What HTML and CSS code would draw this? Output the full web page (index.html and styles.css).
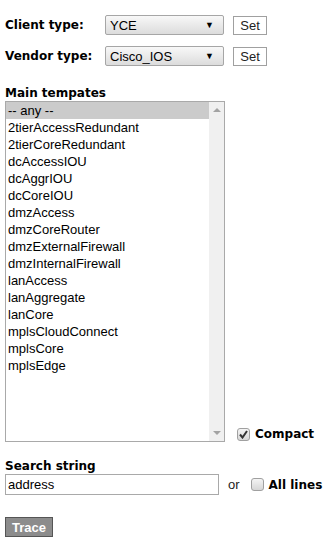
FILE: index.html
```html
<!DOCTYPE html>
<html lang="en">
<head>
  <meta charset="UTF-8" />
  <title>Trace</title>
  <link rel="stylesheet" href="styles.css">
</head>
<body>

<div class="form">
  <!-- types -->
  <div class="type-row">
    <span class="label">Client type:</span>
    <div class="dropdown"><span>YCE</span><span class="arrow">&#9660;</span></div>
    <button class="set-btn">Set</button>
  </div>
  <div class="type-row">
    <span class="label">Vendor type:</span>
    <div class="dropdown"><span>Cisco_IOS</span><span class="arrow">&#9660;</span></div>
    <button class="set-btn">Set</button>
  </div>

  <!-- templates -->
  <div class="heading templates-title">Main tempates</div>
  <div class="templates-row">
    <div class="listbox">
      <div class="options">
        <div class="opt selected">-- any --</div>
        <div class="opt">2tierAccessRedundant</div>
        <div class="opt">2tierCoreRedundant</div>
        <div class="opt">dcAccessIOU</div>
        <div class="opt">dcAggrIOU</div>
        <div class="opt">dcCoreIOU</div>
        <div class="opt">dmzAccess</div>
        <div class="opt">dmzCoreRouter</div>
        <div class="opt">dmzExternalFirewall</div>
        <div class="opt">dmzInternalFirewall</div>
        <div class="opt">lanAccess</div>
        <div class="opt">lanAggregate</div>
        <div class="opt">lanCore</div>
        <div class="opt">mplsCloudConnect</div>
        <div class="opt">mplsCore</div>
        <div class="opt">mplsEdge</div>
      </div>
      <div class="scrollbar">
        <span class="sb-up"></span>
        <span class="sb-down"></span>
      </div>
    </div>
    <label class="check compact">
      <span class="box"><svg width="9" height="9" viewBox="0 0 9 9"><path d="M1 4.5 L3.5 7.5 L8 1" fill="none" stroke="#333" stroke-width="2"/></svg></span>
      <span class="heading">Compact</span>
    </label>
  </div>

  <!-- search -->
  <div class="heading search-title">Search string</div>
  <div class="search-row">
    <div class="textbox">address</div>
    <span class="or">or</span>
    <label class="check">
      <span class="box"></span>
      <span class="heading">All lines</span>
    </label>
  </div>

  <button class="trace-btn">Trace</button>
</div>

</body>
</html>
```

FILE: styles.css
```css
body {
  margin: 0;
  background: #fff;
  color: #000;
  font-family: 'Liberation Sans', Arial, sans-serif;
  font-size: 13px;
}

.form {
  padding: 15px 5px 0 5px;
}

.heading, .label {
  font-family: 'DejaVu Sans', Verdana, sans-serif;
  font-weight: bold;
  font-size: 12px;
  white-space: nowrap;
}

.type-row {
  display: flex;
  align-items: center;
  height: 20px;
  margin-bottom: 11px;
}

.label {
  flex: none;
  width: 100px;
}

.dropdown {
  flex: none;
  width: 113px;
  height: 18px;
  border: 1px solid #a6a6a6;
  border-radius: 2px;
  background: linear-gradient(#f8f8f8, #dcdcdc);
  display: flex;
  align-items: center;
  justify-content: space-between;
  padding: 0 0 0 4px;
}

.dropdown .arrow {
  font-size: 9px;
  margin-right: 9px;
}

.set-btn {
  flex: none;
  margin-left: 9px;
  width: 34px;
  height: 19px;
  padding: 0;
  border: 1px solid #a0a0a0;
  background: #fff;
  font-family: 'Liberation Sans', Arial, sans-serif;
  font-size: 13px;
  color: #222;
}

.templates-title {
  margin-top: 20px;
  line-height: 15px;
}

.templates-row {
  display: flex;
  align-items: flex-end;
}

.listbox {
  flex: none;
  width: 218px;
  height: 339px;
  border: 1px solid #a9a9a9;
  display: flex;
}

.options {
  flex: 1;
}

.opt {
  height: 17px;
  line-height: 17px;
  padding-left: 2px;
  white-space: nowrap;
}

.opt.selected {
  background: #cbcbcb;
}

.scrollbar {
  width: 15px;
  background: #f0f0f0;
  display: flex;
  flex-direction: column;
  justify-content: space-between;
  align-items: center;
  padding: 6px 0;
}

.sb-up, .sb-down {
  width: 0;
  height: 0;
  border-left: 4px solid transparent;
  border-right: 4px solid transparent;
}

.sb-up {
  border-bottom: 4px solid #a3a3a3;
}

.sb-down {
  border-top: 4px solid #a3a3a3;
}

.check {
  display: flex;
  align-items: center;
  white-space: nowrap;
}

.compact {
  margin-left: 12px;
  margin-bottom: 1px;
}

.box {
  flex: none;
  width: 11px;
  height: 11px;
  border: 1px solid #a0a0a0;
  border-radius: 3px;
  background: linear-gradient(#f4f4f4, #d6d6d6);
  margin-right: 5px;
  display: flex;
  align-items: center;
  justify-content: center;
}

.search-title {
  margin-top: 16px;
  line-height: 16px;
}

.search-row {
  display: flex;
  align-items: center;
}

.textbox {
  flex: none;
  width: 210px;
  height: 19px;
  line-height: 19px;
  border: 1px solid #a9a9a9;
  padding-left: 2px;
}

.or {
  margin-left: 9px;
  margin-right: 11px;
  color: #222;
}

.trace-btn {
  margin-top: 22px;
  width: 48px;
  height: 20px;
  padding: 0;
  border: 1px solid #555;
  background: #8c8c8c;
  color: #fff;
  font-family: 'Liberation Sans', Arial, sans-serif;
  font-weight: bold;
  font-size: 13px;
}
```
